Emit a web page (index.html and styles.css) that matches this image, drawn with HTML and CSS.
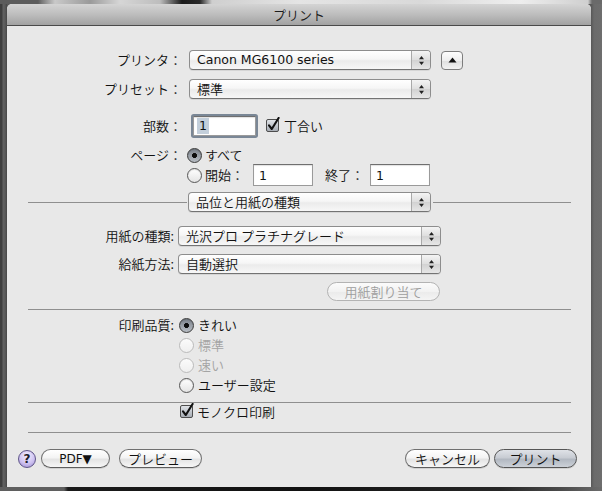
FILE: index.html
```html
<!DOCTYPE html>
<html lang="ja">
<head>
<meta charset="utf-8">
<title>プリント</title>
<link rel="stylesheet" href="styles.css">
</head>
<body>
<div class="screen">
  <div class="top-strip"></div>
  <div class="middle">
    <div class="side-left"></div>
    <div class="dialog">
      <div class="titlebar"><span>プリント</span></div>
      <div class="content">
        <div class="row row-printer">
          <span class="label label-top">プリンタ：</span>
          <div class="popup popup-top">
            <span class="popup-text latin">Canon MG6100 series</span>
            <span class="popup-arrows"><svg width="7" height="11" viewBox="0 0 7 11"><path d="M1 4.2 L3.5 1 L6 4.2Z M1 6.8 L3.5 10 L6 6.8Z" fill="#222"/></svg></span>
          </div>
          <div class="disclose"><svg width="9" height="6" viewBox="0 0 9 6"><path d="M0.5 5.5 L4.5 0.5 L8.5 5.5Z" fill="#111"/></svg></div>
        </div>
        <div class="row row-preset">
          <span class="label label-top">プリセット：</span>
          <div class="popup popup-top">
            <span class="popup-text">標準</span>
            <span class="popup-arrows"><svg width="7" height="11" viewBox="0 0 7 11"><path d="M1 4.2 L3.5 1 L6 4.2Z M1 6.8 L3.5 10 L6 6.8Z" fill="#222"/></svg></span>
          </div>
        </div>
        <div class="row row-copies">
          <span class="label label-top">部数：</span>
          <div class="field field-copies"><span class="sel latin">1</span></div>
          <span class="check"><svg width="15" height="15" viewBox="0 0 15 15"><defs><linearGradient id="cbA" x1="0" y1="0" x2="0" y2="1"><stop offset="0" stop-color="#e2e5e9"/><stop offset="1" stop-color="#a4aab2"/></linearGradient></defs><rect x="0.5" y="2.5" width="12" height="12" rx="1.5" fill="url(#cbA)" stroke="#4d4d4d"/><path d="M3 8.3 L5.8 12 L12.6 1" fill="none" stroke="#111" stroke-width="2.1" stroke-linecap="round" stroke-linejoin="round"/></svg></span>
          <span class="opt">丁合い</span>
        </div>
        <div class="row row-pages1">
          <span class="label label-top">ページ：</span>
          <span class="radio on"></span>
          <span class="opt">すべて</span>
        </div>
        <div class="row row-pages2">
          <span class="radio"></span>
          <span class="opt">開始：</span>
          <div class="field field-page"><span class="latin">1</span></div>
          <span class="opt end-label">終了：</span>
          <div class="field field-page field-end"><span class="latin">1</span></div>
        </div>
        <div class="row row-pane">
          <span class="rule rule-left"></span>
          <div class="popup popup-pane">
            <span class="popup-text">品位と用紙の種類</span>
            <span class="popup-arrows"><svg width="7" height="11" viewBox="0 0 7 11"><path d="M1 4.2 L3.5 1 L6 4.2Z M1 6.8 L3.5 10 L6 6.8Z" fill="#222"/></svg></span>
          </div>
          <span class="rule rule-right"></span>
        </div>
        <div class="row row-paper">
          <span class="label label-bottom">用紙の種類:</span>
          <div class="popup popup-bottom">
            <span class="popup-text">光沢プロ プラチナグレード</span>
            <span class="popup-arrows"><svg width="7" height="11" viewBox="0 0 7 11"><path d="M1 4.2 L3.5 1 L6 4.2Z M1 6.8 L3.5 10 L6 6.8Z" fill="#222"/></svg></span>
          </div>
        </div>
        <div class="row row-feed">
          <span class="label label-bottom">給紙方法:</span>
          <div class="popup popup-bottom">
            <span class="popup-text">自動選択</span>
            <span class="popup-arrows"><svg width="7" height="11" viewBox="0 0 7 11"><path d="M1 4.2 L3.5 1 L6 4.2Z M1 6.8 L3.5 10 L6 6.8Z" fill="#222"/></svg></span>
          </div>
        </div>
        <div class="row row-assign">
          <span class="btn btn-disabled">用紙割り当て</span>
        </div>
        <div class="sep sep1"></div>
        <div class="row radio-row q1">
          <span class="label label-bottom">印刷品質:</span>
          <span class="radio on"></span>
          <span class="opt">きれい</span>
        </div>
        <div class="row radio-row indent">
          <span class="radio dis"></span>
          <span class="opt dis">標準</span>
        </div>
        <div class="row radio-row indent">
          <span class="radio dis"></span>
          <span class="opt dis">速い</span>
        </div>
        <div class="row radio-row indent">
          <span class="radio"></span>
          <span class="opt">ユーザー設定</span>
        </div>
        <div class="sep sep2"></div>
        <div class="row row-mono">
          <span class="check"><svg width="15" height="15" viewBox="0 0 15 15"><defs><linearGradient id="cbB" x1="0" y1="0" x2="0" y2="1"><stop offset="0" stop-color="#e2e5e9"/><stop offset="1" stop-color="#a4aab2"/></linearGradient></defs><rect x="0.5" y="2.5" width="12" height="12" rx="1.5" fill="url(#cbB)" stroke="#4d4d4d"/><path d="M3 8.3 L5.8 12 L12.6 1" fill="none" stroke="#111" stroke-width="2.1" stroke-linecap="round" stroke-linejoin="round"/></svg></span>
          <span class="opt">モノクロ印刷</span>
        </div>
        <div class="sep sep3"></div>
        <div class="row row-buttons">
          <span class="help">?</span>
          <span class="btn btn-pdf latin">PDF▼</span>
          <span class="btn btn-preview">プレビュー</span>
          <span class="spacer"></span>
          <span class="btn btn-cancel">キャンセル</span>
          <span class="btn btn-print">プリント</span>
        </div>
      </div>
    </div>
    <div class="side-right"></div>
  </div>
  <div class="bottom-strip"></div>
</div>
</body>
</html>
```

FILE: styles.css
```css
* { box-sizing: border-box; }
html, body { margin: 0; padding: 0; }
body { width: 602px; height: 491px; overflow: hidden; background: #5a5a5a; }

.screen { width: 602px; height: 491px; display: flex; flex-direction: column; }
.top-strip {
  height: 4px; flex-shrink: 0;
  background: linear-gradient(to right, #5c5c5c 0 38px, #7a7a7a 42px, #c9c9c9 55px, #9a9a9a 90px, #d6d6d6 120px, #bdbdbd 160px, #1b1b1b 182px, #2a2a2a 200px, #cfcfcf 212px, #e4e4e4 300px, #d9d9d9 420px, #eeeeee 520px, #cfcfcf 588px, #6a6a6a 592px);
}
.middle { height: 483px; display: flex; flex-shrink: 0; }
.side-left { width: 7px; background: linear-gradient(to right, #3e3e3e 0 2px, #626262 3px, #5a5a5a 5px, #474747 7px); }
.side-right { flex: 1; background: linear-gradient(to right, #575757, #6b6b6b 3px, #6e6e6e); }
.bottom-strip {
  height: 4px; flex-shrink: 0;
  background: linear-gradient(to right, #5f5f5f 0 64px, #1a1a1a 68px, #111111 300px, #262626 500px, #4a4a4a 560px, #6a6a6a 600px);
}

.dialog {
  width: 584px; display: flex; flex-direction: column;
  background: #e8e8e8; border-radius: 5px 5px 0 0; overflow: hidden;
}
.titlebar {
  height: 22px; flex-shrink: 0;
  border-bottom: 1px solid #4a4a4a;
  background: linear-gradient(#d4d4d4, #bdbdbd 50%, #a2a2a2);
  display: flex; align-items: center; justify-content: center;
  font: 350 13px/16px "Noto Sans CJK JP", sans-serif; color: #1c1c1c;
}

.content {
  flex: 1; padding: 0 14px 0 11px;
  font-family: "Noto Sans CJK JP", sans-serif; font-size: 13px; font-weight: 350; color: #111;
  display: flex; flex-direction: column;
}
.latin { font-family: "DejaVu Sans", "Noto Sans CJK JP", sans-serif; font-size: 12.5px; font-weight: 400; }

.row { display: flex; align-items: center; flex-shrink: 0; }
.label { text-align: right; flex-shrink: 0; line-height: 16px; white-space: nowrap; }
.label-top { width: 164px; }
.label-bottom { width: 156px; }
.opt { line-height: 16px; white-space: nowrap; margin-left: 3px; }
.opt.dis { color: #a4a4a4; }

/* popups */
.popup {
  display: flex; height: 20px; flex-shrink: 0;
  border: 1px solid #8d8d8d; border-bottom-color: #737373; border-radius: 4px;
  background: linear-gradient(#ffffff, #f6f6f6 45%, #ebebeb 55%, #f7f7f7);
  box-shadow: 0 1px 0 rgba(0,0,0,0.08);
  overflow: hidden;
}
.popup-text { flex: 1; padding-left: 7px; line-height: 18px; white-space: nowrap; }
.popup-arrows {
  width: 19px; border-left: 1px solid #a9a9a9;
  background: linear-gradient(#f4f4f4, #dedede 50%, #d2d2d2 52%, #e6e6e6);
  display: flex; align-items: center; justify-content: center;
}
.popup-top { width: 242px; margin-left: 7px; }
.popup-bottom { width: 263px; margin-left: 4px; }
.popup-pane { width: 243px; margin-left: 1px; }

.disclose {
  width: 22px; height: 19px; margin-left: 10px;
  border: 1px solid #7d7d7d; border-radius: 4px;
  background: linear-gradient(#fdfdfd, #eeeeee 50%, #dfdfdf 52%, #f2f2f2);
  display: flex; align-items: center; justify-content: center;
}

/* fields */
.field {
  height: 22px; background: #fff;
  border: 1px solid #9a9a9a; border-top-color: #6f6f6f;
  box-shadow: inset 0 1px 1px rgba(0,0,0,0.12);
  display: flex; align-items: center; padding-left: 5px;
}
.field-copies {
  width: 63px; height: 20px; margin-left: 11px;
  box-shadow: 0 0 0 2px #7a8796, inset 0 1px 1px rgba(0,0,0,0.12);
  border-radius: 1px; padding-left: 3px;
}
.sel { background: #c3cfdb; padding: 0 2px; line-height: 16px; }
.field-page { width: 60px; margin-left: 9px; }
.end-label { margin-left: 12px; }
.field-end { margin-left: 6px; }

.check { width: 15px; height: 15px; display: flex; margin-left: 10px; margin-top: -3px; }
.check svg { display: block; }

/* radios */
.radio {
  width: 15px; height: 15px; border-radius: 50%; flex-shrink: 0;
  border: 1px solid #575757;
  background: linear-gradient(#ffffff, #e4e4e4);
  box-shadow: inset 0 1px 1px rgba(0,0,0,0.12);
}
.radio.on {
  border-color: #3a3a3a;
  background: radial-gradient(circle at 50% 50%, #0d0d0d 0 2.2px, rgba(0,0,0,0) 2.8px), linear-gradient(#7b828b, #b7bcc3);
}
.radio.dis { border-color: #bbbbbb; background: linear-gradient(#fbfbfb, #efefef); box-shadow: none; }

/* vertical rhythm */
.row-printer { margin-top: 24px; height: 20px; }
.row-preset { margin-top: 9px; height: 20px; }
.row-copies { margin-top: 17px; height: 20px; }
.row-pages1 { margin-top: 11px; height: 16px; }
.row-pages1 .radio { margin-left: 5px; }
.row-pages2 { margin-top: 1px; height: 22px; padding-left: 169px; }
.row-pane { margin-top: 6px; height: 20px; align-items: flex-start; }
.rule { height: 1px; background: #8f8f8f; margin-top: 10px; }
.rule-left { width: 159px; margin-left: 10px; }
.rule-right { flex: 1; margin-left: 2px; margin-right: 6px; }
.row-paper { margin-top: 14px; height: 20px; }
.row-feed { margin-top: 8px; height: 20px; }
.row-assign { margin-top: 8px; height: 19px; padding-left: 309px; }

.sep { height: 1px; background: #8f8f8f; margin: 0 6px 0 10px; flex-shrink: 0; }
.sep1 { margin-top: 8px; }
.radio-row { height: 20px; }
.radio-row .opt { margin-left: 4px; }
.q1 { margin-top: 5px; }
.q1 .radio { margin-left: 5px; }
.indent { padding-left: 161px; }
.sep2 { margin-top: 7px; }
.row-mono { height: 18px; padding-left: 162px; }
.row-mono .check { margin-left: 0; }
.row-mono .opt { margin-left: 2px; }
.sep3 { margin-top: 11px; }
.row-buttons { margin-top: 16px; height: 19px; }

/* buttons */
.btn {
  height: 19px; border-radius: 10px; flex-shrink: 0;
  border: 1px solid #707070; border-bottom-color: #5e5e5e;
  background: linear-gradient(#ffffff, #f4f4f4 45%, #e4e4e4 55%, #f6f6f6);
  box-shadow: 0 1px 0 rgba(0,0,0,0.1);
  display: flex; align-items: center; justify-content: center;
  line-height: 16px; white-space: nowrap; color: #111;
}
.btn-disabled { width: 113px; color: #9e9e9e; border-color: #b3b3b3; background: linear-gradient(#fbfbfb, #f2f2f2 50%, #ebebeb 55%, #f4f4f4); box-shadow: none; }
.help {
  width: 18px; height: 18px; border-radius: 50%; flex-shrink: 0;
  border: 1px solid #5e5488;
  background: radial-gradient(circle at 50% 30%, #f3eeff 0, #cfc3f1 55%, #9a8ad0 100%);
  display: flex; align-items: center; justify-content: center;
  font: bold 12px/1 "DejaVu Sans", sans-serif; color: #1b1b2a;
}
.btn-pdf { width: 69px; margin-left: 5px; font-size: 12px; }
.btn-preview { width: 83px; margin-left: 9px; }
.spacer { flex: 1; }
.btn-cancel { width: 85px; }
.btn-print {
  width: 83px; margin-left: 4px; border-color: #555;
  background: linear-gradient(#dfe2e7, #c8ccd3 45%, #b2b8c1 55%, #ccd1d8);
}
```
